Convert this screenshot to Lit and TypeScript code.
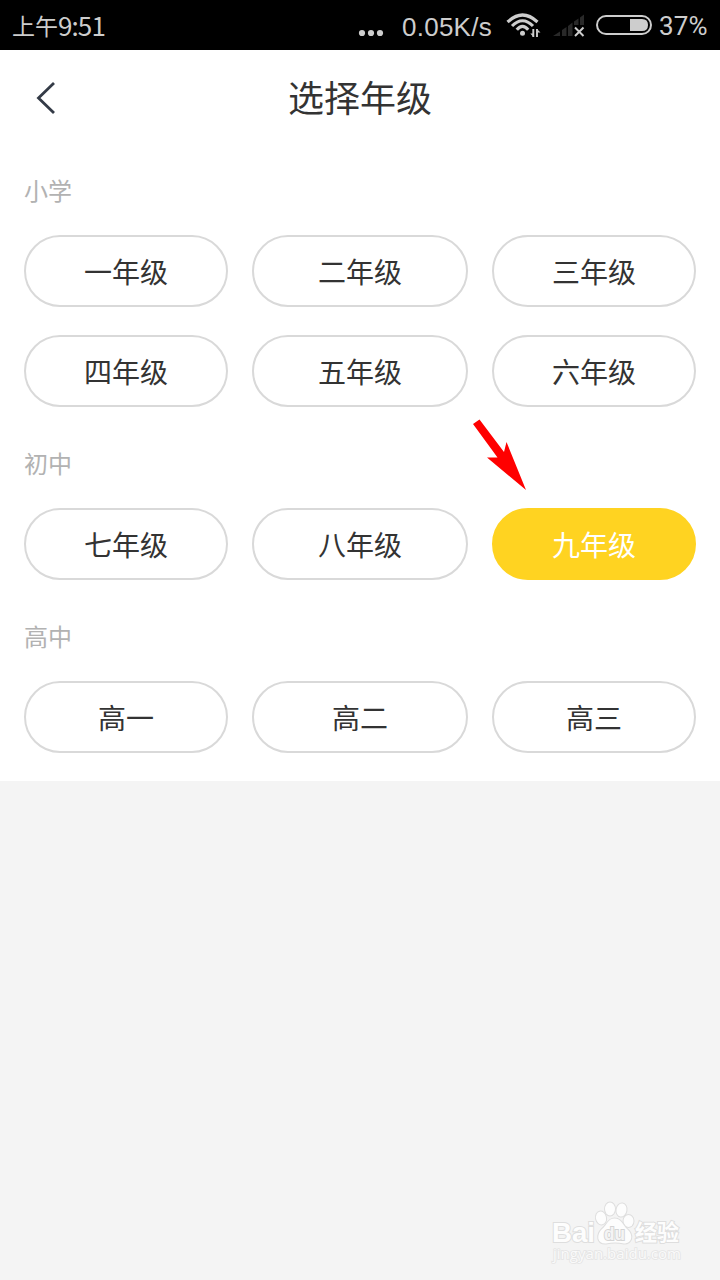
import { LitElement, html, css } from "lit";
import { customElement, property, state } from "lit/decorators.js";
import { classMap } from "lit/directives/class-map.js";

const GROUPS = [
  { label: "小学", grades: ["一年级", "二年级", "三年级", "四年级", "五年级", "六年级"] },
  { label: "初中", grades: ["七年级", "八年级", "九年级"] },
  { label: "高中", grades: ["高一", "高二", "高三"] },
];

@customElement("status-bar")
class StatusBar extends LitElement {
  static styles = css`
    :host {
      display: flex;
      align-items: center;
      box-sizing: border-box;
      height: 50px;
      padding: 0 12px;
      background: #000;
      color: #cdcdcd;
      font: 24px/50px Roboto, "Noto Sans CJK SC", sans-serif;
      white-space: nowrap;
    }
    svg { display: block; flex: none; }
    .time { flex: 1; display: flex; }
    .cjk { font: 23px/52px "Noto Sans CJK SC", sans-serif; }
    .clock { padding-top: 1px; font: 26px/50px "Noto Sans CJK SC", sans-serif; letter-spacing: -0.9px; }
    .speed { width: 91px; margin: 3px 13px 0 18px; font: 26px/50px "Liberation Sans", sans-serif; letter-spacing: 0.25px; }
    .battery { margin-left: 11px; }
    .percent { width: 49px; margin-left: 7px; padding-top: 1px; font-size: 26px; letter-spacing: 0.1px; }
  `;
  render() {
    return html`
      <div class="time"><span class="cjk">上午</span><span class="clock">9:51</span></div>
      <svg width="26" height="50" fill="#cdcdcd">
        <circle cx="4" cy="33" r="3.1" /><circle cx="13" cy="33" r="3.1" /><circle cx="22" cy="33" r="3.1" />
      </svg>
      <span class="speed">0.05K/s</span>
      <svg width="36" height="50" fill="none" stroke="#cdcdcd" stroke-width="3.1">
        <path d="M1.500 22Q16.500 8 31.500 22M6 26Q16.500 15.400 27 26M10.800 29.800Q16.500 23 22.200 29.800" />
        <circle cx="16.500" cy="33.300" r="2.500" fill="#cdcdcd" stroke="none" />
        <path d="M27.300 29V37M31 29V37" stroke-width="1.900" />
        <path d="M24.300 33.500H27V36.500ZM34.500 32.500H31.500V29.500Z" fill="#cdcdcd" stroke="none" />
      </svg>
      <svg width="43" height="50">
        <path d="M11 36L18 31.500V36ZM20 30L24.500 27V36H20ZM26 26L30.500 22.500V36H26ZM32 21.500L36.500 18.500V25H32ZM38 17.500L42 14.500V25H38Z" fill="#292929" />
        <path d="M33 27.500L41.500 36M41.500 27.500L33 36" stroke="#cdcdcd" stroke-width="2" />
      </svg>
      <svg class="battery" width="56" height="50">
        <rect x="1" y="16" width="54" height="18" rx="9" fill="none" stroke="#cdcdcd" stroke-width="2" />
        <path d="M34 19H46Q52 19 52 25Q52 31 46 31H34Z" fill="#cdcdcd" />
      </svg>
      <span class="percent">37%</span>
    `;
  }
}

@customElement("grade-group")
class GradeGroup extends LitElement {
  @property() label = "";
  @property({ attribute: false }) grades: string[] = [];
  @property() selected = "";
  static styles = css`
    :host { display: block; padding: 0 24px 28px; }
    h2 { margin: 0; height: 73px; font-size: 24px; line-height: 56px; font-weight: 400; color: #b2b2b2; }
    .grid { display: grid; grid-template-columns: 204px 216px 204px; gap: 28px 24px; }
    button {
      box-sizing: border-box;
      height: 72px;
      padding: 0;
      border: 2px solid #d9d9d9;
      border-radius: 36px;
      background: #fff;
      color: #333;
      font: inherit;
      font-size: 28px;
      line-height: 66px;
    }
    .active { border-color: #ffd321; background: #ffd321; color: #fff; }
  `;
  render() {
    return html`
      <h2>${this.label}</h2>
      <div class="grid">
        ${this.grades.map(
          (g) => html`<button
            class=${classMap({ active: g === this.selected })}
            @click=${() => this.dispatchEvent(new CustomEvent("pick", { detail: g }))}
          >${g}</button>`
        )}
      </div>
    `;
  }
}

@customElement("app-root")
class AppRoot extends LitElement {
  @state() private selected = "九年级";
  static styles = css`
    :host {
      display: block;
      position: relative;
      width: 720px;
      height: 1280px;
      overflow: hidden;
      background: #f4f4f4;
      font-family: "Noto Sans CJK SC", sans-serif;
    }
    .panel { background: #fff; }
    header {
      display: grid;
      grid-template-columns: 60px 1fr 60px;
      height: 96px;
      margin-bottom: 16px;
    }
    .back { display: block; }
    h1 { margin: 0; font-size: 36px; line-height: 92px; font-weight: 400; color: #333; text-align: center; }
    .arrow { position: absolute; left: 470px; top: 416px; }
    .mark { position: absolute; left: 545px; top: 1195px; }
    .brand { font-family: "Liberation Sans", "Noto Sans CJK SC", sans-serif; font-weight: 700; }
    .site { font-family: "Open Sans", sans-serif; font-size: 14px; }
  `;
  render() {
    return html`
      <status-bar></status-bar>
      <div class="panel">
        <header>
          <svg class="back" width="60" height="96" fill="none" stroke="#343b47" stroke-width="2.800">
            <path d="M54 33L38.500 48L54 63" />
          </svg>
          <h1>选择年级</h1>
        </header>
        ${GROUPS.map(
          (g) => html`<grade-group
            .label=${g.label}
            .grades=${g.grades}
            .selected=${this.selected}
            @pick=${(e: CustomEvent) => (this.selected = e.detail)}
          ></grade-group>`
        )}
      </div>
      <svg class="arrow" width="60" height="80">
        <path d="M3 8L9.500 3.500L34 36L36.500 26L56 74L17 41.500L27.500 41.500Z" fill="#f00" />
      </svg>
      <svg class="mark" width="150" height="78" fill="#fdfdfd" stroke="#dedede" stroke-width="2" paint-order="stroke">
        <text class="brand" x="7" y="47" font-size="28" textLength="43" lengthAdjust="spacingAndGlyphs">Bai</text>
        <ellipse cx="56" cy="23" rx="5" ry="6.500" transform="rotate(-12 56 23)" />
        <ellipse cx="65" cy="14" rx="5" ry="6.500" />
        <ellipse cx="76.500" cy="15" rx="5" ry="6.500" transform="rotate(10 76.500 15)" />
        <ellipse cx="83.500" cy="26" rx="5" ry="6" />
        <path d="M69.500 23.500C76 23.500 78 30 82 34C89 40 87 48.500 79 48.500Q70 46.500 61 48.500C52 49 51 40 57 34C62 30 63 23.500 69.500 23.500Z" />
        <text class="brand" x="59" y="45" font-size="19" textLength="21" lengthAdjust="spacingAndGlyphs" fill="#f4f4f4" stroke="#d4d4d4">du</text>
        <text class="brand" x="90" y="45" font-size="22" textLength="44" lengthAdjust="spacingAndGlyphs">经验</text>
        <text class="site" x="8" y="64" textLength="128" lengthAdjust="spacingAndGlyphs" fill="#fafafa" stroke="#e4e4e4" stroke-width="1.600">jingyan.baidu.com</text>
      </svg>
    `;
  }
}
